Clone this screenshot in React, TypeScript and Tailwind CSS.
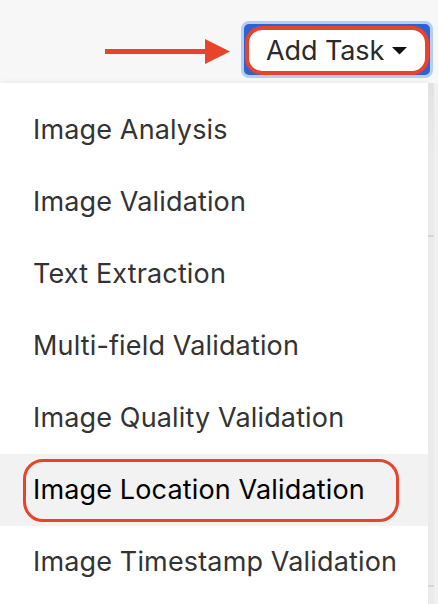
const items = [
  'Image Analysis',
  'Image Validation',
  'Text Extraction',
  'Multi-field Validation',
  'Image Quality Validation',
  'Image Location Validation',
  'Image Timestamp Validation',
];

function Arrow() {
  return (
    <svg width="126" height="26" viewBox="0 0 126 26" className="block">
      <rect x="0" y="10" width="102" height="5" fill="#e8432b" />
      <polygon points="100,0 125,12.5 100,25" fill="#e8432b" />
    </svg>
  );
}

export default function App() {
  return (
    <div
      className="w-[438px] h-[604px] overflow-hidden bg-[#f7f7f7]"
      style={{ fontFamily: 'Inter, "Noto Sans", sans-serif' }}
    >
      {/* header with the button */}
      <div className="h-[83px] flex items-start justify-end pr-[5px] pt-[21px]">
        <div className="mt-[18px] mr-[10px]">
          <Arrow />
        </div>
        <div className="rounded-[8px] border-[3px] border-[#b4cdf5] bg-[#b4cdf5]">
          <div className="w-[186px] h-[51px] rounded-[5px] bg-[#2d62d3] pt-[2px] px-[1px]">
            <div className="h-[49px] rounded-[17px] border-[4px] border-[#e8432b] bg-white flex items-center pl-[17px] gap-[8px]">
              <span className="text-[27px] leading-none text-[#2a2a2a] tracking-[-0.1px]">Add Task</span>
              <svg width="15" height="8" viewBox="0 0 15 8" className="mt-[1px]">
                <polygon points="0,0 15,0 7.5,7.5" fill="#111" />
              </svg>
            </div>
          </div>
        </div>
      </div>

      {/* dropdown menu */}
      <div className="flex h-[521px]">
        <div className="w-[428px] bg-white pt-[11px] shadow-[0_0_6px_rgba(0,0,0,0.08)]">
          {items.map((label, i) => {
            const active = i === 5;
            return (
              <div
                key={label}
                className={`h-[72px] flex items-center pl-[33px] ${active ? 'bg-[#f2f2f2]' : ''}`}
              >
                {active ? (
                  <div className="-ml-[10px] h-[63px] w-[376px] rounded-[20px] border-[3px] border-[#e8432b] flex items-center pl-[7px]">
                    <span className="text-[27px] text-black tracking-[0.15px]">{label}</span>
                  </div>
                ) : (
                  <span className="text-[27px] text-[#333] tracking-[0.15px]">{label}</span>
                )}
              </div>
            );
          })}
        </div>
        <div className="flex-1 flex bg-[#f0f0f0]">
          <div className="w-[6px] bg-[#ebebeb] flex flex-col">
            <div className="h-[70px] bg-gradient-to-b from-[#e2e2e2] to-[#ebebeb]" />
            <div className="h-[2px] mt-[82px] bg-[#d2d6da]" />
            <div className="h-[2px] mt-[348px] bg-[#d6d6d6]" />
          </div>
        </div>
      </div>
    </div>
  );
}
